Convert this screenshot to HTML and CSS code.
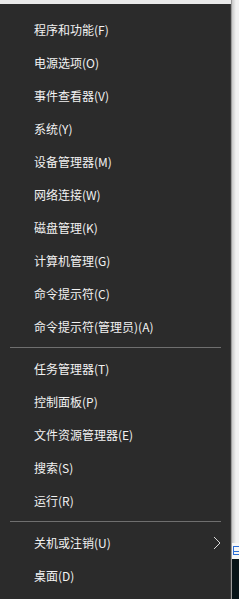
FILE: index.html
```html
<!DOCTYPE html>
<html lang="zh-CN">
<head>
    <meta charset="UTF-8">
    <title>Win+X</title>
    <link rel="stylesheet" href="styles.css">
</head>
<body>
    <div class="menu">
        <div class="item">程序和功能(F)</div>
        <div class="item">电源选项(O)</div>
        <div class="item">事件查看器(V)</div>
        <div class="item">系统(Y)</div>
        <div class="item">设备管理器(M)</div>
        <div class="item">网络连接(W)</div>
        <div class="item">磁盘管理(K)</div>
        <div class="item">计算机管理(G)</div>
        <div class="item">命令提示符(C)</div>
        <div class="item">命令提示符(管理员)(A)</div>
        <div class="sep"></div>
        <div class="item">任务管理器(T)</div>
        <div class="item">控制面板(P)</div>
        <div class="item">文件资源管理器(E)</div>
        <div class="item">搜索(S)</div>
        <div class="item">运行(R)</div>
        <div class="sep"></div>
        <div class="item sub">关机或注销(U)
            <svg class="arrow" width="8" height="14" viewBox="0 0 8 14"><path d="M1 1 L7 7 L1 13" fill="none" stroke="#d8d8d8" stroke-width="1"/></svg>
        </div>
        <div class="item">桌面(D)</div>
    </div>
    <div class="behind">
        <div class="shade"></div>
        <div class="peek"><span class="glyph"></span></div>
        <div class="dark"></div>
    </div>
</body>
</html>
```

FILE: styles.css
```css
html, body {
    margin: 0;
    padding: 0;
    height: 100%;
}
body {
    display: flex;
    background-color: #e9e9e9;
    font-family: "Microsoft YaHei", "Noto Sans CJK SC", sans-serif;
    overflow: hidden;
}
.menu {
    width: 230px;
    margin-top: 4px;
    padding-top: 9px;
    background-color: #2b2b2b;
    border-right: 1px solid #3c3c3c;
    flex-shrink: 0;
}
.item {
    height: 33px;
    line-height: 33px;
    padding-left: 34px;
    font-size: 12px;
    color: #f2f2f2;
    position: relative;
}
.sep {
    height: 1px;
    margin: 4px 9px 4px 10px;
    background-color: #6f6f6f;
}
.arrow {
    position: absolute;
    right: 9px;
    top: 10px;
}
.behind {
    flex: 1;
    display: flex;
    flex-direction: column;
    border-left: 1px solid #9a9a9a;
    background: linear-gradient(to right, #c8c8c8, #f2f2f2 4px);
}
.shade {
    flex: 1;
}
.peek {
    height: 16px;
    padding: 3px 0 0 1px;
    box-sizing: border-box;
    background-color: #f7f7f7;
}
.glyph {
    display: block;
    width: 7px;
    height: 9px;
    border-left: 1px solid #2b6fd6;
    border-top: 1px solid #2b6fd6;
    border-bottom: 1px solid #2b6fd6;
    box-sizing: border-box;
    background: linear-gradient(#2b6fd6, #2b6fd6) 0 4px / 7px 1px no-repeat;
}
.dark {
    height: 40px;
    background-color: #081418;
}
```
